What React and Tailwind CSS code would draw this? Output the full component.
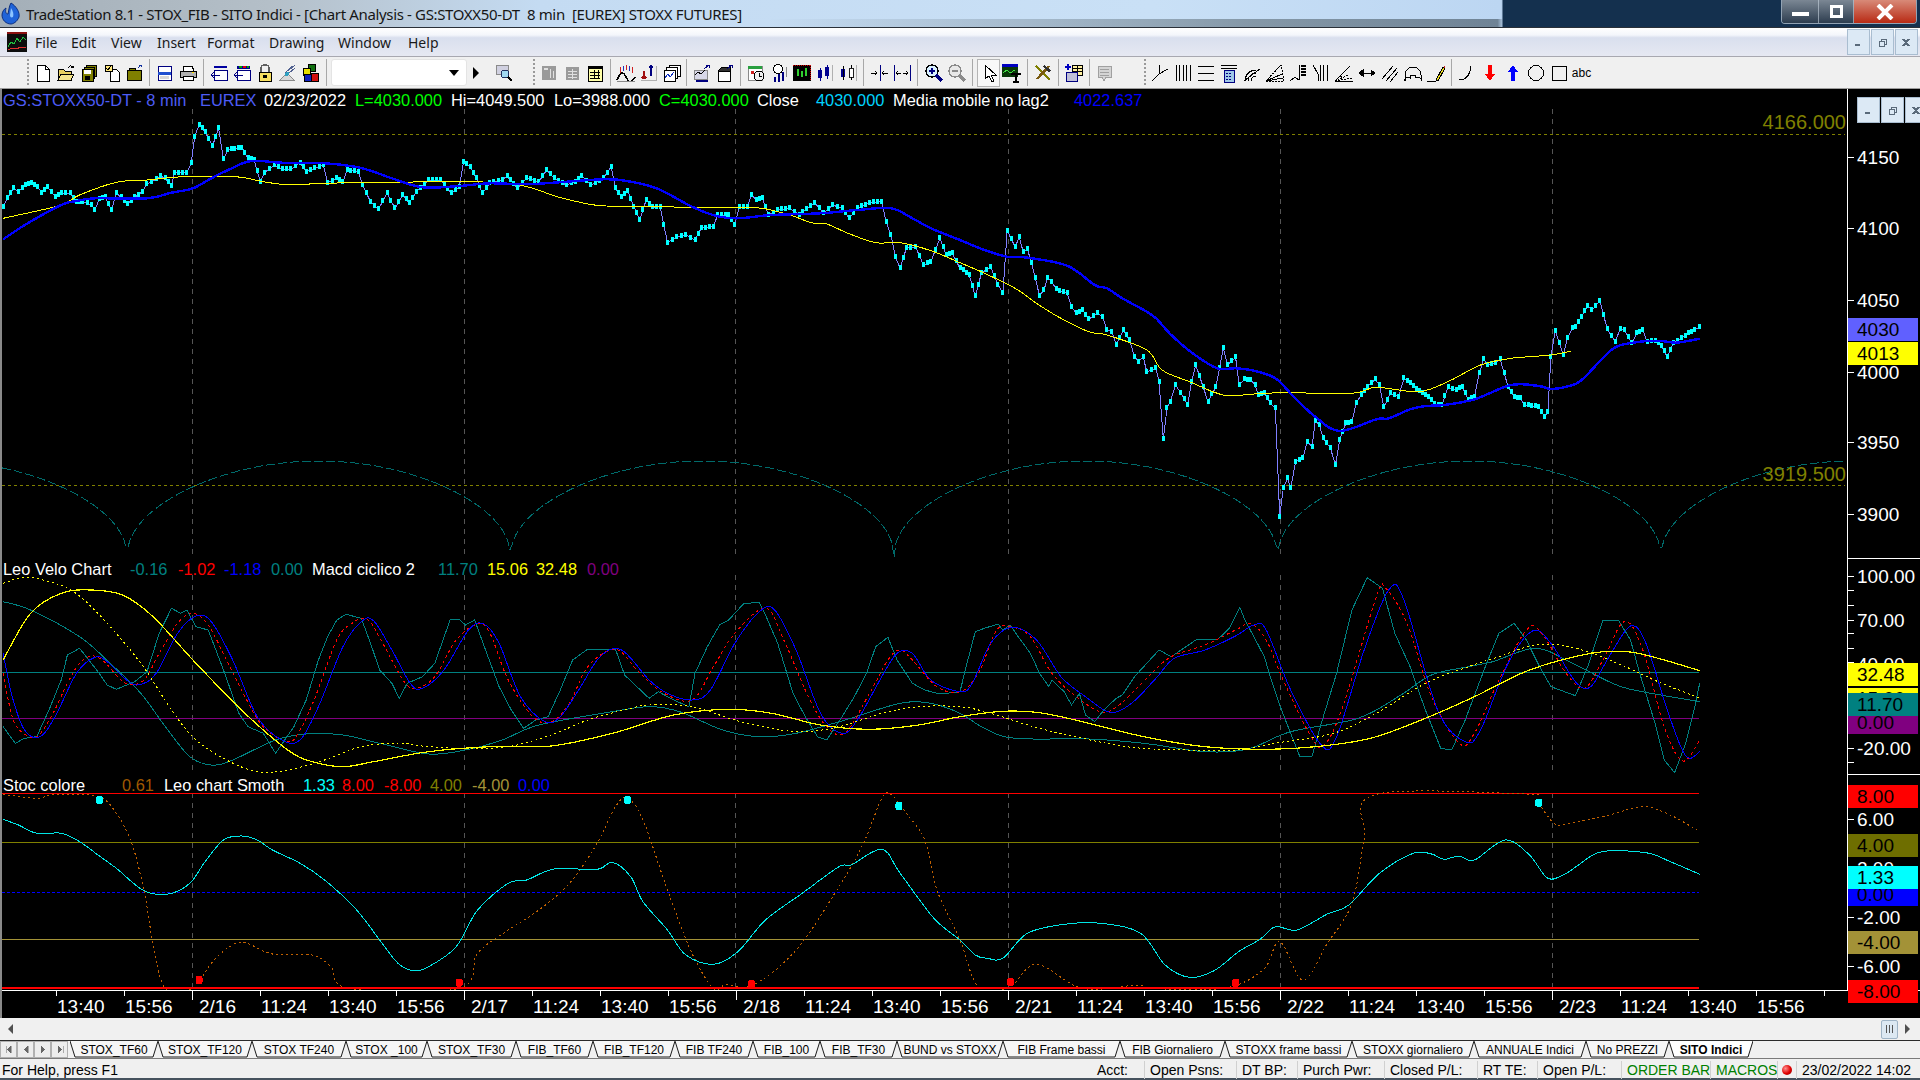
import React from 'react';

// zoomed-crop trace coordinates -> page coordinates
const parse = (s, xo, yo) => s.trim().split(/\s+/).map(p => {
  const [x, y] = p.split(',').map(Number);
  return [xo + x / 1.633, yo + y / 3];
});
const poly = pts => pts.map(p => p[0].toFixed(1) + ',' + p[1].toFixed(1)).join(' ');
const smooth = pts => {
  let d = `M${pts[0][0].toFixed(1)} ${pts[0][1].toFixed(1)}`;
  for (let i = 0; i < pts.length - 1; i++) {
    const p0 = pts[i - 1] || pts[i], p1 = pts[i], p2 = pts[i + 1], p3 = pts[i + 2] || p2;
    d += `C${(p1[0] + (p2[0] - p0[0]) / 6).toFixed(1)} ${(p1[1] + (p2[1] - p0[1]) / 6).toFixed(1)} ${(p2[0] - (p3[0] - p1[0]) / 6).toFixed(1)} ${(p2[1] - (p3[1] - p1[1]) / 6).toFixed(1)} ${p2[0].toFixed(1)} ${p2[1].toFixed(1)}`;
  }
  return d;
};
const trace = (a, b, yo) => [...parse(a, 0, yo), ...parse(b, 960, yo)];

const price = trace(
  `5,320 12,295 22,265 30,275 42,255 52,250 62,262 68,278 78,262 90,290 100,280 115,280 125,305 135,305 150,315 155,330 162,298 172,292 182,330 190,280 198,292 208,312 220,292 232,275 240,252 255,238 262,228 270,235 280,258 285,218 305,218 312,190 318,110 325,75 335,95 347,138 357,85 365,178 372,150 395,143 405,175 415,180 425,245 432,218 448,195 462,208 475,208 490,188 500,215 528,195 535,248 550,235 560,245 567,210 585,215 592,255 605,305 618,328 632,280 645,325 658,285 668,310 680,275 700,240 720,240 737,280 750,260 757,185 768,200 778,235 788,280 800,250 820,240 828,228 845,265 860,235 880,245 893,210 905,235 925,255 940,245 950,228 965,255 985,235 998,200 1005,265 1015,290 1025,272 1035,320 1045,360 1055,300 1065,322 1078,320 1090,428 1105,410 1120,405 1135,420 1145,385 1165,380 1172,345 1190,345 1200,375 1207,322 1220,322 1227,285 1235,300 1245,295 1255,345 1270,330 1290,325 1305,345 1330,308 1345,340 1360,315 1375,325 1387,355 1400,325 1420,308 1440,305 1447,365 1455,405 1462,470 1470,505 1480,445 1495,440 1508,495 1520,485 1535,415 1545,465 1555,460`,
  `0,505 5,510 15,525 25,588 35,520 50,500 62,555 70,578 77,392 90,440 97,412 103,455 110,447 117,490 123,535 130,588 137,570 143,535 150,545 157,568 175,580 182,620 190,640 200,630 210,658 225,640 233,650 240,690 248,695 255,735 267,690 277,720 285,770 292,785 299,770 305,815 320,805 325,845 332,1018 338,925 343,905 352,855 360,878 372,915 378,845 385,795 397,860 405,905 418,860 430,745 437,795 450,772 456,855 465,838 475,840 482,855 487,885 497,880 507,910 515,925 522,1250 528,1165 535,1135 540,1165 548,1085 560,1075 567,1025 575,1040 580,962 587,975 593,1015 605,1045 613,1095 620,1020 630,970 640,965 647,910 655,885 665,860 678,838 685,855 692,922 703,880 716,890 725,835 735,850 745,868 755,878 765,890 775,912 787,915 797,862 810,870 820,860 830,900 840,890 848,820 855,778 862,795 875,790 882,778 895,860 905,890 915,895 922,915 945,920 955,952 960,935 965,770 972,692 985,765 992,715 1000,685 1005,680 1015,650 1025,618 1032,630 1045,603 1057,688 1070,725 1078,688 1085,690 1097,730 1105,700 1115,690 1122,725 1135,722 1145,738 1155,770 1165,730 1178,715 1190,700 1200,690 1208,680`,
  100);

// one bar every 4px, plus the traced turning points
const priceDots = (() => {
  const out = [];
  for (let i = 0; i < price.length - 1; i++) {
    const [x1, y1] = price[i], [x2, y2] = price[i + 1];
    const n = Math.max(1, Math.round((x2 - x1) / 4));
    for (let k = 0; k < n; k++) out.push([x1 + (x2 - x1) * k / n, y1 + (y2 - y1) * k / n]);
  }
  out.push(price[price.length - 1]);
  return out;
})();

const blueMa = trace(
  `5,418 45,370 100,315 125,303 155,295 240,295 280,278 315,265 345,235 375,208 410,183 460,188 530,190 580,200 610,215 640,235 690,262 750,258 800,250 870,252 985,238 1030,245 1075,267 1130,320 1170,348 1205,355 1260,345 1340,340 1400,330 1455,325 1490,355 1520,385`,
  `0,420 40,450 77,470 110,473 175,497 220,555 240,565 265,595 300,630 320,655 345,705 380,760 420,805 450,805 480,812 515,835 545,890 580,950 620,993 680,958 700,955 735,928 760,918 790,915 840,898 900,855 945,858 965,867 990,860 1015,840 1065,748 1100,728 1140,722 1170,728 1208,716`,
  100);
const yellowMa = trace(
  `5,355 30,345 100,315 130,285 190,247 240,240 300,230 385,230 430,245 470,254 530,250 590,248 750,245 830,250 870,265 910,290 960,312 990,318 1050,320 1200,323 1245,325 1290,345 1325,368 1350,372 1385,400 1430,428 1470,428 1520,452`,
  `0,488 40,520 90,565 125,610 160,650 210,695 240,705 305,750 330,810 375,845 430,885 480,882 530,878 640,880 680,862 750,875 800,842 850,795 900,775 965,765 998,753`,
  100);

const arches = (() => {
  const pts = [];
  for (let x = 2; x <= 1845; x += 2) {
    const s = Math.abs(Math.sin(Math.PI * (x - 127) / 383.5));
    pts.push([x, 557 - 96 * Math.pow(s, 0.47)]);
  }
  return pts;
})();

const fast = trace(
  `5,530 25,580 40,565 60,560 80,480 100,390 110,315 130,295 160,365 175,405 190,418 220,395 240,365 260,250 280,175 295,190 305,180 320,230 340,240 365,360 390,490 405,530 430,550 450,610 480,530 500,450 520,330 535,260 550,210 565,193 590,205 605,280 620,360 640,400 652,445 665,400 690,380 710,340 735,210 750,208 760,225 775,210 795,310 815,410 835,480 855,535 875,510 895,500 915,420 935,330 960,297 1005,297 1020,375 1040,410 1060,445 1075,425 1100,450 1125,470 1135,370 1155,290 1175,225 1190,210 1200,190 1215,160 1240,158 1250,195 1270,280 1295,430 1315,500 1335,560 1350,570 1375,500 1395,440 1415,370 1430,290 1450,262 1465,330 1490,400 1510,420 1535,432`,
  `0,425 10,350 25,245 40,235 62,222 70,240 82,225 95,260 115,310 130,370 145,410 150,390 170,425 182,465 195,430 205,495 220,515 235,480 255,445 265,435 285,380 305,340 325,300 345,320 385,270 400,268 420,270 440,235 457,172 465,210 480,260 497,320 510,400 525,480 555,620 575,618 590,520 615,370 640,180 665,83 690,115 710,250 735,350 760,480 785,595 803,600 825,510 860,340 880,250 905,220 925,270 945,345 965,410 1005,437 1025,350 1050,210 1075,210 1095,270 1110,370 1135,520 1150,630 1167,668 1185,580 1200,470 1208,400`,
  550);
const redDash = trace(
  `5,370 20,500 35,545 60,560 85,495 110,400 130,340 150,318 170,335 205,400 235,390 260,310 290,220 315,190 340,225 370,330 400,440 430,530 470,575 490,540 515,440 550,270 575,220 600,208 625,280 660,395 680,415 710,380 745,270 780,222 800,250 830,390 870,500 900,515 930,460 960,350 1005,298 1040,360 1080,425 1130,450 1165,350 1200,250 1250,175 1280,270 1320,440 1350,530 1380,548 1420,430 1450,330 1470,300 1490,330 1530,410`,
  `0,425 30,370 60,240 85,232 115,260 150,370 190,440 230,485 260,465 310,375 345,320 400,285 450,240 475,222 500,270 530,400 575,565 595,585 625,470 680,140 695,115 730,220 770,440 815,580 840,550 880,390 925,240 950,250 990,370 1020,415 1050,330 1085,215 1115,300 1150,530 1180,633 1208,570`,
  550);
const blueFast = trace(
  `5,310 20,440 40,540 65,560 90,500 125,370 155,322 175,335 210,395 230,403 255,370 290,250 320,198 345,215 380,330 420,500 460,570 490,570 520,470 560,290 590,215 610,212 640,300 670,400 690,415 725,360 765,240 790,222 815,280 850,440 890,515 915,500 945,420 980,320 1015,300 1060,390 1090,430 1130,450 1160,420 1200,280 1240,185 1265,180 1300,300 1340,490 1375,550 1400,510 1440,380 1465,310 1490,310 1520,390`,
  `0,425 20,400 50,280 85,232 125,270 165,380 205,440 245,487 280,460 320,385 350,325 400,300 450,258 480,225 500,240 540,420 590,585 615,560 660,300 700,120 725,150 780,480 825,575 850,540 895,340 935,243 965,280 1005,395 1030,410 1060,320 1095,228 1120,280 1155,480 1185,618 1208,605`,
  550);
const yellowDash = trace(
  `5,100 40,82 80,95 120,125 165,200 230,340 280,480 320,570 370,630 420,665 470,660 530,630 590,590 650,580 700,590 760,595 830,590 900,555 960,510 1020,480 1060,465 1130,470 1210,515 1300,545 1370,530 1440,490 1500,470`,
  `0,470 50,490 120,530 200,565 280,592 370,600 450,600 530,575 610,550 680,490 760,400 830,350 880,320 945,283 1010,297 1080,345 1140,395 1208,445`,
  550);
const yellowSlow = trace(
  `5,330 50,190 100,130 150,120 200,135 250,200 320,340 400,490 470,600 510,635 560,650 610,635 700,605 800,590 900,588 1000,550 1100,495 1190,478 1260,490 1340,525 1420,538 1500,525`,
  `0,500 70,484 130,488 200,515 300,560 400,590 500,598 580,590 670,565 760,505 840,440 930,360 1030,310 1090,305 1140,325 1208,362`,
  550);
const tealSlow = trace(
  `5,155 50,180 130,260 180,340 230,430 270,530 310,620 345,645 380,630 450,570 500,552 560,555 620,580 700,612 760,600 820,570 880,525 1000,485 1060,470 1110,485 1180,540 1240,560 1300,550 1380,510 1470,460 1520,460`,
  `0,490 40,535 90,565 210,567 300,580 400,605 470,597 540,545 650,505 720,435 770,375 830,350 870,335 940,295 1000,340 1060,395 1100,420 1208,455`,
  550);
const stocCyan = trace(
  `5,808 30,825 60,850 100,850 130,875 160,915 190,955 235,1022 275,1032 310,1000 335,935 365,870 395,858 420,870 445,900 490,940 530,990 580,1075 620,1170 650,1240 675,1262 700,1250 745,1190 780,1080 830,1000 860,990 905,957 975,958 1000,937 1030,980 1050,1055 1090,1140 1120,1215 1165,1243 1205,1205 1250,1110 1310,1030 1370,950 1390,945 1440,898 1470,970 1525,1105`,
  `0,1170 25,1215 45,1225 70,1225 110,1150 170,1123 230,1120 295,1150 335,1245 375,1282 415,1262 455,1205 490,1168 515,1130 550,1140 600,1092 635,1065 685,970 740,910 770,912 790,928 815,918 840,930 890,870 930,915 960,985 990,970 1010,945 1048,905 1120,908 1160,935 1208,973`,
  550);
const stocOrange = trace(
  `5,733 60,745 90,733 160,740 190,790 215,880 235,1020 250,1180 270,1315 315,1315 345,1240 375,1190 400,1178 445,1212 510,1215 540,1250 570,1315 750,1315 780,1210 830,1140 880,1080 930,1000 975,880 1005,770 1025,745 1050,810 1090,1020 1130,1210 1165,1315 1185,1305 1230,1305 1300,1200 1370,1010 1410,880 1440,745 1455,733 1480,790 1510,870 1530,1020`,
  `0,1170 30,1310 80,1312 125,1243 200,1315 290,1305 310,1315 430,1315 495,1260 522,1175 560,1290 600,1180 640,1060 660,870 680,733 945,733`,
  550);
const stocOrangeEnd = parse(`945,760 970,820 990,822 1060,795 1115,770 1160,795 1208,845`, 960, 550);

const markers = [
  ...parse('162,750 1025,750 1468,768', 0, 550).map(p => [...p, '#00ffff']),
  ...parse('945,758', 960, 550).map(p => [...p, '#00ffff']),
  ...parse('325,1290 750,1298 1227,1302', 0, 550).map(p => [...p, '#ff0000']),
  ...parse('83,1296 450,1298', 960, 550).map(p => [...p, '#ff0000']),
];

const sessions = [192, 464, 735, 1008, 1280, 1552];

function Sessions({ y1, y2 }) {
  return sessions.map(x => (
    <line key={x} x1={x} x2={x} y1={y1} y2={y2} stroke="#555555" strokeDasharray="5 5" />
  ));
}

function PriceChart() {
  return (
    <svg className="absolute inset-0 w-full h-full" viewBox="2 89 1845 469" shapeRendering="crispEdges" fill="none">
      <Sessions y1={109} y2={557} />
      <line x1="2" x2="1845" y1="134" y2="134" stroke="#808000" strokeDasharray="3 3" />
      <line x1="2" x2="1845" y1="485" y2="485" stroke="#808000" strokeDasharray="3 3" />
      <polyline points={poly(arches)} stroke="#006a6a" strokeDasharray="9 3" />
      <polyline points={poly(price)} stroke="#7f7fff" />
      {priceDots.map((p, i) => <rect key={i} x={p[0] - 1.5} y={p[1] - 3} width="3" height="5" fill="#00ffff" />)}
      <path d={smooth(yellowMa)} stroke="#ffff00" strokeWidth="1" />
      <path d={smooth(blueMa)} stroke="#0000ff" strokeWidth="2.4" />
    </svg>
  );
}

function MacdChart() {
  return (
    <svg className="absolute inset-0 w-full h-full" viewBox="2 558 1845 216" shapeRendering="crispEdges" fill="none">
      <Sessions y1={575} y2={770} />
      <line x1="2" x2="1699" y1="672" y2="672" stroke="#008080" />
      <line x1="2" x2="1699" y1="718" y2="718" stroke="#800080" />
      <polyline points={poly(fast)} stroke="#008080" />
      <path d={smooth(tealSlow)} stroke="#008080" />
      <path d={smooth(redDash)} stroke="#ff0000" strokeDasharray="3 3" />
      <path d={smooth(blueFast)} stroke="#0000ff" />
      <path d={smooth(yellowDash)} stroke="#ffff00" strokeDasharray="2 3" />
      <path d={smooth(yellowSlow)} stroke="#ffff00" strokeWidth="1.2" />
    </svg>
  );
}

function StocChart() {
  return (
    <svg className="absolute inset-0 w-full h-full" viewBox="2 774 1845 216" fill="none" shapeRendering="crispEdges">
      <Sessions y1={793} y2={988} />
      <line x1="2" x2="1699" y1="793" y2="793" stroke="#ff0000" />
      <line x1="2" x2="1699" y1="842" y2="842" stroke="#808000" />
      <line x1="2" x2="1699" y1="892" y2="892" stroke="#0000ff" strokeDasharray="3 2" />
      <line x1="2" x2="1699" y1="939" y2="939" stroke="#a39237" />
      <path d={smooth(stocOrange)} stroke="#c06000" strokeDasharray="2 3" />
      <path d={smooth(stocOrangeEnd)} stroke="#c06000" strokeDasharray="2 3" />
      <line x1="2" x2="1699" y1="988" y2="988" stroke="#ff0000" strokeWidth="2" />
      <path d={smooth(stocCyan)} stroke="#00e5e5" />
      {markers.map((m, i) => <rect key={i} x={m[0] - 3.5} y={m[1] - 4} width="7" height="8" rx="2.5" fill={m[2]} />)}
    </svg>
  );
}

const legendPrice = [
  ['GS:STOXX50-DT - 8 min', 'w-[197px] text-[#4d5cf5]'],
  ['EUREX', 'w-[64px] text-[#4d5cf5]'],
  ['02/23/2022', 'w-[91px] text-white'],
  ['L=4030.000', 'w-[96px] text-[#00ff00]'],
  ['Hi=4049.500', 'w-[103px] text-white'],
  ['Lo=3988.000', 'w-[105px] text-white'],
  ['C=4030.000', 'w-[98px] text-[#00ff00]'],
  ['Close', 'w-[59px] text-white'],
  ['4030.000', 'w-[77px] text-[#00d4ff]'],
  ['Media mobile no lag2', 'w-[181px] text-white'],
  ['4022.637', 'text-[#0000ff]'],
];
const legendMacd = [
  ['Leo Velo Chart', 'w-[127px] text-white'],
  ['-0.16', 'w-[48px] text-[#008080]'],
  ['-1.02', 'w-[46px] text-[#ff0000]'],
  ['-1.18', 'w-[47px] text-[#0000ff]'],
  ['0.00', 'w-[41px] text-[#008080]'],
  ['Macd ciclico 2', 'w-[126px] text-white'],
  ['11.70', 'w-[49px] text-[#008080]'],
  ['15.06', 'w-[49px] text-[#ffff00]'],
  ['32.48', 'w-[51px] text-[#ffff00]'],
  ['0.00', 'text-[#800080]'],
];
const legendStoc = [
  ['Stoc colore', 'w-[119px] text-white'],
  ['0.61', 'w-[42px] text-[#a05a00]'],
  ['Leo chart Smoth', 'w-[139px] text-white'],
  ['1.33', 'w-[39px] text-[#00ffff]'],
  ['8.00', 'w-[42px] text-[#ff0000]'],
  ['-8.00', 'w-[46px] text-[#ff0000]'],
  ['4.00', 'w-[42px] text-[#808000]'],
  ['-4.00', 'w-[46px] text-[#a39237]'],
  ['0.00', 'text-[#0000ff]'],
];

function Legend({ items }) {
  return (
    <div className="absolute left-[1px] top-0 flex text-[16.4px] leading-[22px] whitespace-pre">
      {items.map(([t, c], i) => <span key={i} className={c}>{t}</span>)}
    </div>
  );
}

// right-hand scale: plain labels and colour tags share one slot shape
function Scale({ items, ticks }) {
  return (
    <>
      {ticks.map(t => <div key={t} className={`absolute left-0 w-[6px] h-px bg-white ${t}`} />)}
      {items.map(([t, c], i) => (
        <div key={i} className={`absolute left-0 w-[70px] h-[23px] leading-[23px] text-[19px] pl-[9px] overflow-hidden ${c}`}>{t}</div>
      ))}
    </>
  );
}

const scalePrice = [
  ['4150', 'top-[57px] text-white'], ['4100', 'top-[128px] text-white'], ['4050', 'top-[200px] text-white'],
  ['4000', 'top-[272px] text-white'], ['3950', 'top-[342px] text-white'], ['3900', 'top-[414px] text-white'],
  ['4030', 'top-[229px] bg-[#6060ff] text-black'], ['4013', 'top-[253px] bg-[#ffff00] text-black'],
];
const ticksPrice = ['top-[68px]', 'top-[139px]', 'top-[211px]', 'top-[283px]', 'top-[353px]', 'top-[425px]'];
const scaleMacd = [
  ['100.00', 'top-[6px] text-white'], ['70.00', 'top-[50px] text-white'], ['40.00', 'top-[94px] text-white'],
  ['-20.00', 'top-[178px] text-white'],
  ['0.00', 'top-[152px] bg-[#800080] text-black'], ['15.06', 'top-[128px] bg-[#ffff00] text-black'],
  ['32.48', 'top-[104px] bg-[#ffff00] text-black'], ['11.70', 'top-[134px] bg-[#008080] text-black'],
];
const ticksMacd = ['top-[17px]', 'top-[31px]', 'top-[46px]', 'top-[61px]', 'top-[74px]', 'top-[89px]', 'top-[103px]', 'top-[189px]', 'top-[203px]'];
const scaleStoc = [
  ['6.00', 'top-[33px] text-white'], ['2.00', 'top-[82px] text-white'], ['-2.00', 'top-[131px] text-white'], ['-6.00', 'top-[180px] text-white'],
  ['8.00', 'top-[10px] bg-[#ff0000] text-black'], ['4.00', 'top-[59px] bg-[#6e6e00] text-black'],
  ['0.00', 'top-[108px] bg-[#0000ff] text-black'], ['1.33', 'top-[91px] bg-[#00ffff] text-black'],
  ['-4.00', 'top-[156px] bg-[#a39237] text-black'], ['-8.00', 'top-[205px] bg-[#ff0000] text-black z-10'],
];
const ticksStoc = ['top-[44px]', 'top-[142px]', 'top-[191px]'];

const timeLabels = ['13:40', '15:56', '2/16', '11:24', '13:40', '15:56', '2/17', '11:24', '13:40', '15:56', '2/18', '11:24', '13:40', '15:56', '2/21', '11:24', '13:40', '15:56', '2/22', '11:24', '13:40', '15:56', '2/23', '11:24', '13:40', '15:56', ''];

// toolbar drawings
const Svg = ({ children, className = '' }) => (
  <svg width="20" height="20" viewBox="0 0 20 20" shapeRendering="crispEdges" className={className}>{children}</svg>
);
const k = '#000000', g = '#8a8a8a', o = '#808000';
const icons = {
  newDoc: <Svg><path d="M4.5 2.5h8l3.5 3.500v12h-11.500z" fill="#fff" stroke={k} /><path d="M12.500 2.500v3.500h3.500" fill="none" stroke={k} /></Svg>,
  open: <Svg><path d="M2 17V6h5l2 2h6v9z" fill="#e8d060" stroke={k} /><path d="M2 17l3-6h13l-3 6z" fill="#f4e48c" stroke={k} /><path d="M12 5c2-3 4-3 5 0m0 0l-2-1m2 1l1-2" fill="none" stroke={k} /></Svg>,
  saveAll: <Svg><rect x="7" y="2" width="10" height="11" fill={o} stroke={k} /><rect x="5" y="4" width="10" height="11" fill={o} stroke={k} /><rect x="3" y="6" width="11" height="12" fill={o} stroke={k} /><rect x="5" y="6.500" width="7" height="4" fill="#fff" /><rect x="6" y="13" width="5" height="4" fill={k} /></Svg>,
  docCheck: <Svg><path d="M8 6h6l3 3v9H8z" fill="#fff" stroke={k} /><rect x="3" y="2" width="7" height="6" fill="#ffe87c" stroke={k} /><path d="M4 5l2 2 3-4" fill="none" stroke={k} /></Svg>,
  boxArrow: <Svg><rect x="2" y="7" width="14" height="10" fill={o} stroke={k} /><rect x="4" y="5" width="6" height="2" fill={o} stroke={k} /><path d="M13 5l3-3m0 0h-2m2 0v2" fill="none" stroke="#1030a0" /></Svg>,
  blueWin: <Svg><rect x="3" y="3" width="13" height="14" fill="#fff" stroke="#000080" /><rect x="3" y="9" width="13" height="3" fill="#2050d0" /><rect x="5" y="13" width="9" height="3" fill="#d8d8d8" /></Svg>,
  printer: <Svg><path d="M6 3h8l2 5H5z" fill="#fff" stroke={k} /><rect x="2" y="8" width="16" height="6" fill="#b0b0b0" stroke={k} /><rect x="5" y="13" width="10" height="4" fill="#fff" stroke={k} /><rect x="14" y="9" width="2" height="1" fill="#ffe000" /></Svg>,
  winBack: <Svg><rect x="5" y="3" width="13" height="2" fill="#0000a0" /><rect x="5" y="7" width="13" height="10" fill="#fff" stroke="#000080" /><path d="M2 12h9M2 12l3-3M2 12l3 3" fill="none" stroke="#000080" /></Svg>,
  winBackColor: <Svg><rect x="5" y="7" width="13" height="10" fill="#fff" stroke="#000080" /><rect x="5" y="3" width="13" height="3" fill="#000090" /><rect x="7" y="3" width="3" height="2" fill="#00a000" /><rect x="11" y="3" width="3" height="2" fill="#e00000" /><rect x="15" y="3" width="2" height="2" fill="#00a000" /><path d="M2 12h9M2 12l3-3M2 12l3 3" fill="none" stroke="#000080" /></Svg>,
  lock: <Svg><path d="M6 9V5c0-4 8-4 8 0v4" fill="none" stroke="#606060" strokeWidth="1.500" /><rect x="4" y="9" width="12" height="9" fill="#f8e060" stroke={k} /><rect x="8" y="12" width="4" height="3" fill={k} /></Svg>,
  hatch: <Svg><path d="M2 17l7-7 7 7z" fill="#d8d8d8" stroke={g} /><path d="M10 8l7-6M7 10l7-7M11 10l6-5" stroke="#506090" fill="none" /><circle cx="9" cy="11" r="2" fill="#30a0c0" /></Svg>,
  cubes: <Svg><rect x="7" y="1" width="7" height="7" fill="#107010" stroke={k} /><rect x="2" y="5" width="7" height="7" fill="#e8e000" stroke={k} /><rect x="3" y="11" width="7" height="7" fill="#1020c0" stroke={k} /><rect x="10" y="10" width="7" height="8" fill="#d01010" stroke={k} /></Svg>,
  magDoc: <Svg><rect x="2" y="2" width="12" height="9" fill="#d0d0e0" stroke={g} /><circle cx="11" cy="11" r="4" fill="#a0d8f0" stroke="#203060" /><path d="M14 14l4 4" stroke={k} strokeWidth="2" /></Svg>,
  grayDoc: <Svg><rect x="3" y="3" width="14" height="14" fill="#9a9a9a" /><rect x="5" y="5" width="4" height="2" fill="#e0e0e0" /><path d="M11 6v9M14 8v7" stroke="#e0e0e0" /></Svg>,
  grayTable: <Svg><rect x="4" y="4" width="13" height="13" fill="#9a9a9a" /><path d="M6 8h9M6 11h9M6 14h9M10 6v10" stroke="#e0e0e0" /></Svg>,
  table: <Svg><rect x="3" y="3" width="14" height="15" fill="#ffffa8" stroke={k} /><rect x="3" y="3" width="14" height="3" fill={k} /><path d="M5 9h10M5 12h10M5 15h10M9 7v9M13 7v9" stroke={k} /></Svg>,
  waveBars: <Svg><path d="M4 4v6M10 2v5M16 4v6" stroke="#d02020" /><path d="M7 3v5M13 3v5" stroke="#2030c0" /><path d="M1 17c4-9 6-9 9-3s5 6 9 0" fill="none" stroke={k} strokeWidth="1.500" /><path d="M1 18h18" stroke={g} /></Svg>,
  sortBars: <Svg><path d="M5 8v8m0 0l-2-2m2 2l2-2" fill="none" stroke="#a01010" strokeWidth="1.500" /><path d="M12 13V3m0 0l-2 2m2-2l2 2" fill="none" stroke="#000080" strokeWidth="1.500" /><path d="M17 3v14H2" fill="none" stroke="#b0b0b0" /></Svg>,
  stackChart: <Svg><rect x="7" y="2" width="11" height="11" fill="#fff" stroke={k} /><rect x="4.500" y="4.500" width="11" height="11" fill="#fff" stroke={k} /><rect x="2" y="7" width="11" height="11" fill="#fff" stroke={k} /><path d="M3 15l3-4 2 3 4-5" fill="none" stroke="#1030c0" /></Svg>,
  chartArrow: <Svg><rect x="2" y="7" width="13" height="9" fill="#d8d8e8" stroke={g} /><path d="M3 12l3-3 3 2 4-4" fill="none" stroke={k} /><path d="M12 6l5-4m0 0h-3m3 0v3" fill="none" stroke="#000080" /><path d="M4 18h12" stroke="#000080" strokeWidth="2" /></Svg>,
  boxOpen: <Svg><rect x="3" y="8" width="12" height="10" fill="#fff" stroke={k} /><path d="M3 8l4-4h8v4" fill="#303030" stroke={k} /><path d="M12 6l5-4m0 0h-3m3 0v3" fill="none" stroke="#000080" /></Svg>,
  calendar: <Svg><rect x="2" y="3" width="14" height="14" fill="#fff" stroke={g} /><rect x="2" y="3" width="14" height="3" fill="#2aa040" /><circle cx="13" cy="13" r="5" fill="#f0f0f0" stroke={k} /><path d="M13 10v3h3" fill="none" stroke={k} /><rect x="5" y="8" width="3" height="3" fill="#d02020" /></Svg>,
  globeBars: <Svg><circle cx="9" cy="6" r="4.500" fill="#fff" stroke={k} /><path d="M6 14v5M10 11v8M14 9v9" stroke="#000080" strokeWidth="2" /><path d="M17 4v10" stroke={g} /></Svg>,
  darkChart: <Svg><rect x="1" y="2" width="18" height="16" fill={k} /><path d="M1 2.500h18M18.500 2v16" stroke="#e00000" strokeDasharray="1 1" /><path d="M6 6v7M10 8v6M14 5v8" stroke="#30d030" strokeWidth="2" /></Svg>,
  candlesBlue: <Svg><rect x="3" y="7" width="4" height="8" fill="#000090" /><rect x="10" y="4" width="4" height="9" fill="#000090" /><path d="M5 5v13M12 2v14" stroke="#000090" /><path d="M17 2v16" stroke="#b0b0b0" /></Svg>,
  candlesRed: <Svg><rect x="3" y="6" width="4" height="8" fill="#000090" /><rect x="11" y="5" width="4" height="9" fill="#fff" stroke="#202020" /><path d="M5 3v14M13 2v3M13 14v3" stroke={k} /><path d="M18 2v16" stroke="#b0b0b0" /></Svg>,
  pinch: <Svg><path d="M11 2v16" stroke="#000080" /><path d="M2 10h6m0 0l-2-2m2 2l-2 2M19 10h-6m0 0l2-2m-2 2l2 2" fill="none" stroke={k} /></Svg>,
  spread: <Svg><path d="M2 2v16M18 2v16" stroke="#000080" /><path d="M9 10H4m0 0l2-2m-2 2l2 2M11 10h5m0 0l-2-2m2 2l-2 2" fill="none" stroke={k} /></Svg>,
  zoomIn: <Svg><circle cx="8" cy="8" r="6" fill="#d8f0ff" stroke={k} strokeWidth="1.500" /><path d="M5 8h6M8 5v6" stroke="#000080" strokeWidth="1.500" /><path d="M12 12l6 6" stroke="#000080" strokeWidth="3" /></Svg>,
  zoomOut: <Svg><circle cx="8" cy="8" r="6" fill="#e8e8e8" stroke={g} strokeWidth="1.500" /><path d="M5 8h6" stroke={g} strokeWidth="1.500" /><path d="M12 12l6 6" stroke={g} strokeWidth="3" /></Svg>,
  pointer: <Svg><path d="M6 2v14l4-3 3 6 2-1-3-6h5z" fill="#fff" stroke={k} /></Svg>,
  chartText: <Svg><rect x="0" y="1" width="16" height="13" fill="#083808" /><rect x="0" y="1" width="16" height="3" fill="#0000c0" /><path d="M1 10l4-3 3 3 5-3" fill="none" stroke="#40e040" /><path d="M9 11h10M14 11v8M11 19h6" fill="none" stroke={k} strokeWidth="2" /></Svg>,
  tools: <Svg><path d="M3 3l14 14" stroke={o} strokeWidth="2.500" /><path d="M16 3L4 16" stroke="#7a5a10" strokeWidth="2.500" /><path d="M11 2l7 5-2 2-6-5z" fill="#303030" /></Svg>,
  addTable: <Svg><rect x="8" y="2" width="10" height="10" fill="#fff0a0" stroke={k} /><path d="M8 5h10M8 8h10M13 2v10" stroke={k} /><rect x="2" y="9" width="11" height="9" fill="#c0c0d8" stroke="#000080" /><path d="M1 4h6M4 1v6" stroke="#0000c0" strokeWidth="2" /></Svg>,
  grayList: <Svg><path d="M3 3h13v11h-5l-2 4-2-4H3z" fill="#d4d4d4" stroke="#a0a0a0" /><path d="M5 6h9M5 9h9M5 12h9" stroke="#a0a0a0" /></Svg>,
  fork: <Svg><path d="M2 18l7-7M9 11l1-9M9 11l9-5" fill="none" stroke={k} /></Svg>,
  vlines: <Svg><path d="M3 2v16M6.500 2v16M10 2v16M13.500 2v16M17 2v16" stroke={k} /></Svg>,
  hlines: <Svg><path d="M2 3h16M2 10h16M2 17h16" stroke={k} /></Svg>,
  calc: <Svg><path d="M2 2h16M2 5h16" stroke={k} /><rect x="5" y="7" width="10" height="12" fill="#a0c8e8" stroke="#000080" /><path d="M7 10h6M7 13h6M7 16h6" stroke="#000080" strokeDasharray="2 1" /></Svg>,
  arcs: <Svg><path d="M3 18a11 11 0 0 1 11-11M6 18a8 8 0 0 1 8-8M9 18a5 5 0 0 1 5-5" fill="none" stroke={k} /><path d="M2 18L18 6" stroke={k} /></Svg>,
  fan: <Svg><path d="M1 18h18L16 2z" fill="none" stroke={k} strokeDasharray="2 1" /><path d="M1 18l16-7M1 18l17-3" stroke={k} /></Svg>,
  retrace: <Svg><path d="M2 18l5-4 4 3" fill="none" stroke={k} /><path d="M11 2v15" stroke={k} /><path d="M13 3h5M13 6h5M13 9h5M13 12h5" stroke={k} strokeWidth="1.500" /></Svg>,
  vfan: <Svg><path d="M2 2l5 9v7M9 2v16M12.500 2v16M16 2v16" fill="none" stroke={k} /></Svg>,
  angle: <Svg><path d="M1 18h18M1 18L16 3" fill="none" stroke={k} /><path d="M1 18l13-6M1 18l17-3M8 18a8 8 0 0 0-2-6" fill="none" stroke={k} strokeDasharray="2 1" /></Svg>,
  horiz: <Svg><path d="M2 10h16M2 10l4-3v6zM18 10l-4-3v6z" fill={k} stroke={k} /></Svg>,
  diag: <Svg><path d="M2 16L13 3M6 18L17 5M10 19L18 9" stroke={k} /></Svg>,
  gann: <Svg><path d="M2 12a8 8 0 0 1 16 0" fill="none" stroke={k} /><path d="M2 12v6M18 12v6M2 18a3 3 0 0 1 5-3 3 3 0 0 1 6 0 3 3 0 0 1 5 3" fill="none" stroke={k} /></Svg>,
  pencil: <Svg><path d="M1 18h9" stroke={k} /><path d="M10 17l7-13 2 1-7 13z" fill="#f0e020" stroke={k} /><path d="M17 4l2 1 0-3z" fill="#d02020" /></Svg>,
  curve: <Svg><path d="M2 17c7 0 11-5 12-14" fill="none" stroke={k} /></Svg>,
  down: <Svg><path d="M8 2h4v9h3l-5 7-5-7h3z" fill="#ff0000" /></Svg>,
  up: <Svg><path d="M8 18h4V9h3l-5-7-5 7h3z" fill="#0000ff" /></Svg>,
  circle: <Svg><circle cx="10" cy="10" r="7.500" fill="none" stroke={k} /></Svg>,
  square: <Svg><rect x="3" y="3" width="14" height="14" fill="none" stroke={k} /></Svg>,
};

const Cell = ({ name, active }) => (
  <div className={`w-[23px] h-[28px] flex items-center justify-center shrink-0 ${active ? 'border border-[#b5b5b5] bg-[#f8f8f8]' : ''}`}>{icons[name]}</div>
);
const Sep = ({ w }) => <div className={`h-[27px] flex justify-center shrink-0 ${w}`}><div className="w-px h-full bg-[#a8a8a8]" /></div>;
const Grip = ({ w }) => (
  <div className={`h-[28px] flex justify-end pr-[2px] shrink-0 ${w}`}>
    <div className="w-[2px] h-full bg-[repeating-linear-gradient(180deg,#9a9a9a_0,#9a9a9a_2px,transparent_2px,transparent_4px)]" />
  </div>
);

function Toolbar() {
  return (
    <div className="h-[32px] flex items-center bg-[#f0f0f0] border-b border-[#9c9c9c] pl-[25px] shrink-0">
      <Grip w="w-[6px]" />
      <Cell name="newDoc" /><Cell name="open" /><Cell name="saveAll" /><Cell name="docCheck" /><Cell name="boxArrow" />
      <Sep w="w-[7px]" />
      <Cell name="blueWin" /><Cell name="printer" />
      <Sep w="w-[8px]" />
      <Cell name="winBack" /><Cell name="winBackColor" /><Cell name="lock" /><Cell name="hatch" /><Cell name="cubes" />
      <Sep w="w-[9px]" />
      <div className="w-[136px] h-[27px] bg-white rounded-[3px] border border-[#e4e4e4] flex items-center justify-end pr-[7px] shrink-0">
        <div className="w-0 h-0 border-x-[5px] border-x-transparent border-t-[6px] border-t-black" />
      </div>
      <div className="w-[18px] flex justify-center shrink-0">
        <div className="w-0 h-0 border-y-[6px] border-y-transparent border-l-[6px] border-l-black" />
      </div>
      <div className="w-[7px] shrink-0" />
      <Cell name="magDoc" />
      <Grip w="w-[22px]" />
      <Cell name="grayDoc" /><Cell name="grayTable" /><Cell name="table" />
      <Sep w="w-[8px]" />
      <Cell name="waveBars" /><Cell name="sortBars" /><Cell name="stackChart" />
      <Sep w="w-[7px]" />
      <Cell name="chartArrow" /><Cell name="boxOpen" />
      <Sep w="w-[8px]" />
      <Cell name="calendar" /><Cell name="globeBars" /><Cell name="darkChart" /><Cell name="candlesBlue" /><Cell name="candlesRed" />
      <Sep w="w-[8px]" />
      <Cell name="pinch" /><Cell name="spread" />
      <Sep w="w-[9px]" />
      <Cell name="zoomIn" /><Cell name="zoomOut" />
      <Sep w="w-[9px]" />
      <Cell name="pointer" active /><Cell name="chartText" />
      <Sep w="w-[8px]" />
      <Cell name="tools" />
      <Sep w="w-[8px]" />
      <Cell name="addTable" />
      <Sep w="w-[8px]" />
      <Cell name="grayList" />
      <Grip w="w-[32px]" />
      <Cell name="fork" /><Cell name="vlines" /><Cell name="hlines" /><Cell name="calc" /><Cell name="arcs" /><Cell name="fan" />
      <Cell name="retrace" /><Cell name="vfan" /><Cell name="angle" /><Cell name="horiz" /><Cell name="diag" /><Cell name="gann" /><Cell name="pencil" />
      <Sep w="w-[8px]" />
      <Cell name="curve" /><Cell name="down" /><Cell name="up" /><Cell name="circle" /><Cell name="square" />
      <div className="w-[23px] text-center text-[12px] text-black shrink-0">abc</div>
    </div>
  );
}

// small minimise / restore / close squares, used by both the frame and the inner chart window
const mdiGlyphs = [
  <path key="min" d="M3 8h5v2H3z" fill="#5a6a7a" />,
  <path key="max" d="M3.500 5.500h5v5h-5zM5.500 5.500v-2h5v5h-2" fill="none" stroke="#5a6a7a" />,
  <path key="close" d="M3 3l6 7M9 3l-6 7" fill="none" stroke="#5a6a7a" strokeWidth="2" />,
];
const MdiButtons = () => mdiGlyphs.map((glyph, i) => (
  <div key={i} className="w-[23px] h-[26px] shrink-0 flex items-center justify-center bg-[#dce9f5] border border-[#a9bdd0] mr-px">
    <svg width="13" height="13" viewBox="0 0 13 13" shapeRendering="crispEdges">{glyph}</svg>
  </div>
));

const menus = [
  ['File', 'w-[36px]'], ['Edit', 'w-[40px]'], ['View', 'w-[46px]'], ['Insert', 'w-[50px]'],
  ['Format', 'w-[62px]'], ['Drawing', 'w-[69px]'], ['Window', 'w-[70px]'], ['Help', 'w-[40px]'],
];

const tabs = [
  ['STOX_TF60', 88], ['STOX_TF120', 94], ['STOX TF240', 94], ['STOX _100', 81], ['STOX_TF30', 89],
  ['FIB_TF60', 77], ['FIB_TF120', 82], ['FIB TF240', 78], ['FIB_100', 67], ['FIB_TF30', 77],
  ['BUND vs STOXX', 106], ['FIB Frame bassi', 117], ['FIB Giornaliero', 105], ['STOXX frame bassi', 127],
  ['STOXX giornaliero', 122], ['ANNUALE Indici', 112], ['No PREZZI', 83], ['SITO Indici', 84],
];
const tabNav = [
  'M3 2v7M8 2L4 5.500 8 9z',
  'M8 2L4 5.500 8 9z',
  'M4 2l4 3.500L4 9z',
  'M9 2v7M4 2l4 3.500L4 9z',
];

const statusCells = [
  ['Open Psns:', 'w-[92px] text-black'], ['DT BP:', 'w-[61px] text-black'], ['Purch Pwr:', 'w-[87px] text-black'],
  ['Closed P/L:', 'w-[93px] text-black'], ['RT TE:', 'w-[60px] text-black'], ['Open P/L:', 'w-[84px] text-black'],
  ['ORDER BAR', 'w-[89px] text-[#008000]'], ['MACROS', 'w-[67px] text-[#008000]'],
];

export default function App() {
  return (
    <div className="w-[1920px] h-[1080px] overflow-hidden flex flex-col bg-[#f0f0f0] font-['Liberation_Sans',Arial,sans-serif]">
      {/* title bar */}
      <div className="h-[28px] relative flex items-start shrink-0 border-b border-[#2a3038] bg-[linear-gradient(90deg,#a4afb8_0%,#b4bfc8_14%,#c4dbf2_28%,#c9e0f6_60%,#bcd6f2_78.2%,#14304e_78.3%,#14304e_100%)]">
        <div className="absolute inset-x-0 bottom-0 h-[8px] bg-[linear-gradient(90deg,transparent_40%,#5a6a74_65%,#3c4c58_78%,transparent_78.3%)] opacity-60" />
        <svg width="20" height="24" viewBox="0 0 20 24" className="relative ml-[1px] mt-[2px]">
          <path d="M10 1c5 3 9 9 8 14-2 5-6 7-8 7-5 0-9-4-9-9 0-3 2-6 4-7-1 4 0 6 2 6 1-4 1-8 3-11z" fill="#1f63d8" stroke="#0c2f80" />
          <path d="M10 6c2 3 3 6 2 9-2 1-3 0-3-2z" fill="#8cc4ff" />
        </svg>
        <span className="relative ml-[5px] mt-[4px] text-[15px] leading-[20px] text-[#161616] whitespace-pre font-['Noto_Sans',sans-serif] tracking-[-0.35px]">TradeStation 8.1 - STOX_FIB - SITO Indici - [Chart Analysis - GS:STOXX50-DT  8 min  [EUREX] STOXX FUTURES]</span>
        <div className="relative ml-auto mr-[3px] flex h-[24px] border border-t-0 border-[#c8d4e0]/70 rounded-b-[4px] overflow-hidden">
          <div className="w-[37px] flex items-end justify-center pb-[7px] bg-[linear-gradient(180deg,#7b8794,#2d3d4f)] border-r border-[#c8d4e0]/60"><div className="w-[17px] h-[4px] bg-white" /></div>
          <div className="w-[35px] flex items-center justify-center bg-[linear-gradient(180deg,#7b8794,#2d3d4f)] border-r border-[#c8d4e0]/60"><div className="w-[13px] h-[13px] border-[3px] border-white" /></div>
          <div className="w-[62px] flex items-center justify-center bg-[linear-gradient(180deg,#d88a78,#b82a14)]">
            <svg width="20" height="16" viewBox="0 0 20 16"><path d="M3 1l14 14M17 1L3 15" stroke="#fff" strokeWidth="4" /></svg>
          </div>
        </div>
      </div>

      {/* menu bar */}
      <div className="h-[29px] flex items-center shrink-0 border-b border-[#a8a8b0] bg-[linear-gradient(180deg,#ffffff_0%,#f4f6fb_25%,#d9dfee_35%,#e6e8f2_100%)] pl-[7px]">
        <svg width="20" height="20" viewBox="0 0 20 20" className="shrink-0" shapeRendering="crispEdges">
          <rect width="20" height="20" fill="#0d0d0d" />
          <rect width="20" height="2" fill="#8a1010" />
          <path d="M1 15l3-5 3 2 3-6 3 4 3-5 3 3" fill="none" stroke="#20c040" />
          <path d="M1 18l4-2 4 1 5-2 5 1" fill="none" stroke="#e03030" />
        </svg>
        <div className="flex ml-[8px] text-[14px] text-[#1a1a1a] font-['Noto_Sans',sans-serif]">
          {menus.map(([m, w]) => <span key={m} className={w}>{m}</span>)}
        </div>
        <div className="ml-auto flex pr-[1px]"><MdiButtons /></div>
      </div>

      <Toolbar />

      {/* chart window */}
      <div className="flex-1 flex flex-col border-l-2 border-[#8a8a8a] bg-black min-h-0">
        <div className="h-[469px] flex shrink-0">
          <div className="w-[1845px] relative shrink-0">
            <PriceChart />
            <Legend items={legendPrice} />
            <div className="absolute right-[1px] top-[22px] text-[20px] leading-[22px] text-[#808000]">4166.000</div>
            <div className="absolute right-[1px] top-[374px] text-[20px] leading-[22px] text-[#808000]">3919.500</div>
          </div>
          <div className="flex-1 relative border-l border-white">
            <Scale items={scalePrice} ticks={ticksPrice} />
            <div className="absolute left-[9px] top-[8px] flex w-[63px] overflow-hidden"><MdiButtons /></div>
          </div>
        </div>
        <div className="h-[216px] flex shrink-0">
          <div className="w-[1845px] relative shrink-0">
            <MacdChart />
            <Legend items={legendMacd} />
          </div>
          <div className="flex-1 relative border-l border-t border-white">
            <Scale items={scaleMacd} ticks={ticksMacd} />
            <div className="absolute left-0 top-[127px] w-[70px] h-[2px] bg-black" />
          </div>
        </div>
        <div className="h-[216px] flex shrink-0">
          <div className="w-[1845px] relative shrink-0">
            <StocChart />
            <Legend items={legendStoc} />
          </div>
          <div className="flex-1 relative border-l border-t border-white">
            <Scale items={scaleStoc} ticks={ticksStoc} />
          </div>
        </div>
        <div className="h-[28px] border-t border-white flex shrink-0 pl-[54px] text-[19px] text-white leading-[25px] overflow-hidden">
          {timeLabels.map((t, i) => (
            <div key={i} className={`w-[68px] relative pt-[3px] shrink-0 ${t.includes('/') ? 'pl-[7px]' : 'pl-[1px]'}`}>
              <div className={`absolute left-0 top-0 w-px bg-white ${t.includes('/') ? 'h-[9px]' : 'h-[5px]'}`} />
              {t}
            </div>
          ))}
        </div>
      </div>

      {/* horizontal scrollbar */}
      <div className="h-[23px] shrink-0 flex items-center bg-[#f0f0f0] pl-[8px] border-b border-[#2a2a2a]">
        <div className="w-0 h-0 border-y-[5px] border-y-transparent border-r-[5px] border-r-[#505050]" />
        <div className="ml-auto w-[17px] h-[19px] bg-[#dce8f2] border border-[#9fb4c6] rounded-[2px] flex items-center justify-center gap-[2px]">
          <div className="w-px h-[8px] bg-[#555]" /><div className="w-px h-[8px] bg-[#555]" /><div className="w-px h-[8px] bg-[#555]" />
        </div>
        <div className="ml-[7px] mr-[10px] w-0 h-0 border-y-[5px] border-y-transparent border-l-[5px] border-l-[#505050]" />
      </div>

      {/* workspace tabs */}
      <div className="h-[18px] shrink-0 flex bg-[#f0f0f0] border-b border-[#7a7a7a] text-[12px] text-black">
        {tabNav.map(d => (
          <div key={d} className="w-[17px] shrink-0 flex items-center justify-center border border-[#b0b0b0] bg-[#ececec]">
            <svg width="12" height="11" viewBox="0 0 12 11" shapeRendering="crispEdges"><path d={d} fill="#666" stroke="#666" strokeWidth="0.5" /></svg>
          </div>
        ))}
        <div className="w-[2px] shrink-0" />
        {tabs.map(([name, w], i) => {
          const active = i === tabs.length - 1;
          return (
            <div key={name} className={`relative shrink-0 flex items-center justify-center whitespace-pre ${active ? 'font-bold' : ''}`} style={{ width: w }}>
              <svg className="absolute inset-0" width={w} height="17" viewBox={`0 0 ${w} 17`}>
                <path d={`M0 0L5 16H${w - 5}L${w} 0`} fill={active ? '#ffffff' : '#f6f6f6'} stroke="#1a1a1a" />
              </svg>
              <span className="relative">{name}</span>
            </div>
          );
        })}
      </div>

      {/* status bar */}
      <div className="h-[21px] shrink-0 flex items-center bg-[#f0f0f0] text-[14px] text-black leading-[18px] pt-[2px] border-b-2 border-[#46525e] whitespace-pre">
        <div className="w-[1144px] shrink-0 flex justify-between pl-[2px] pr-[16px]">
          <span>For Help, press F1</span><span>Acct:</span>
        </div>
        {statusCells.map(([t, c]) => (
          <div key={t} className={`shrink-0 border-l border-[#d0d0d0] pl-[5px] ${c}`}>{t}</div>
        ))}
        <div className="w-[19px] shrink-0 border-l border-[#d0d0d0] flex justify-center items-center h-[18px]">
          <div className="w-[10px] h-[10px] rounded-full bg-[radial-gradient(circle_at_35%_35%,#ff9090,#e00000_55%,#800000)]" />
        </div>
        <div className="shrink-0 border-l border-[#d0d0d0] pl-[5px]">23/02/2022 14:02</div>
      </div>
    </div>
  );
}
